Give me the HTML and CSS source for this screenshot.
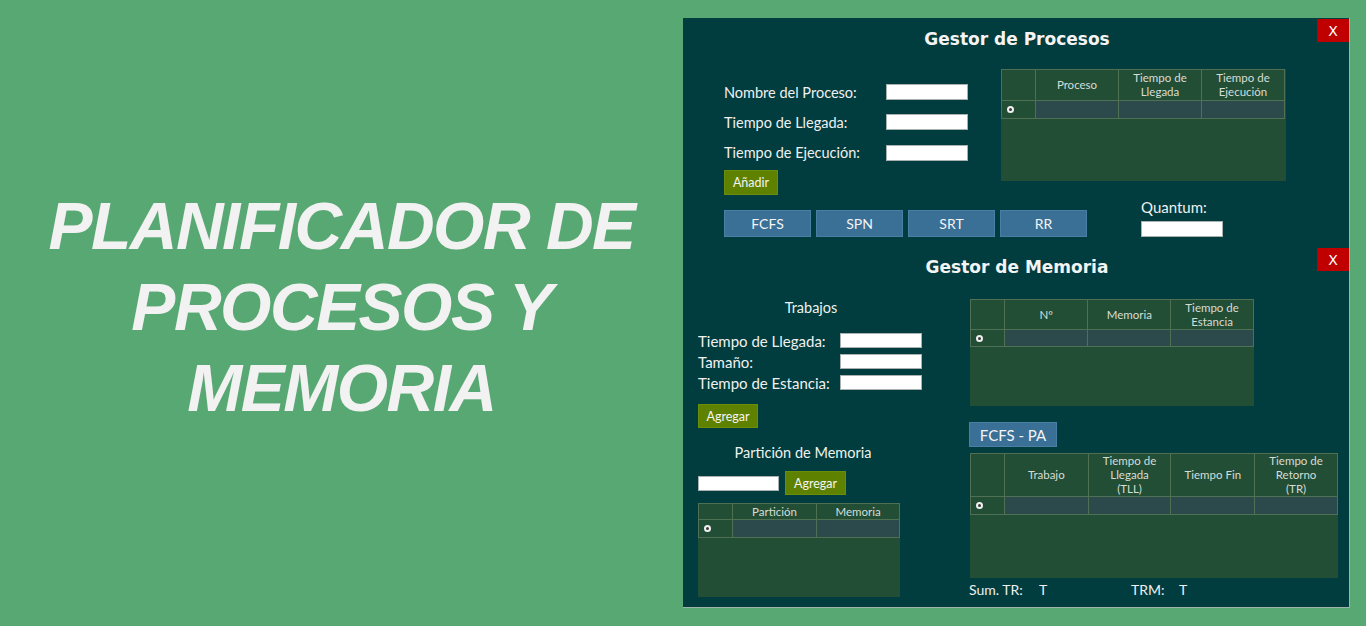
FILE: index.html
```html
<!DOCTYPE html>
<html lang="es">
<head>
<meta charset="utf-8">
<title>Planificador de Procesos y Memoria</title>
<link rel="stylesheet" href="styles.css">
</head>
<body>
<div class="hero">
  <h1 class="hero-title">PLANIFICADOR DE<br>PROCESOS Y<br>MEMORIA</h1>
</div>
<div class="window">
  <section class="proc">
    <header class="win-head">
      <h2 class="win-title">Gestor de Procesos</h2>
      <button class="close">X</button>
    </header>
    <div class="proc-top">
      <div class="proc-form">
        <div class="frow"><label class="flabel">Nombre del Proceso:</label><input class="field" type="text"></div>
        <div class="frow"><label class="flabel">Tiempo de Llegada:</label><input class="field" type="text"></div>
        <div class="frow frow-last"><label class="flabel">Tiempo de Ejecución:</label><input class="field" type="text"></div>
        <button class="btn btn-olive btn-anadir">Añadir</button>
      </div>
      <div class="tbl tbl-proc">
        <table>
          <colgroup><col class="c-rh"><col class="c83"><col class="c83"><col class="c83"></colgroup>
          <tr class="hrow hrow-proc"><th></th><th>Proceso</th><th>Tiempo de<br>Llegada</th><th>Tiempo de<br>Ejecución</th></tr>
          <tr class="drow"><td class="rh"><span class="dot"></span></td><td></td><td></td><td></td></tr>
        </table>
      </div>
    </div>
    <div class="proc-bottom">
      <div class="algos">
        <button class="btn btn-blue btn-algo">FCFS</button>
        <button class="btn btn-blue btn-algo">SPN</button>
        <button class="btn btn-blue btn-algo">SRT</button>
        <button class="btn btn-blue btn-algo">RR</button>
      </div>
      <div class="quantum">
        <div class="qlabel">Quantum:</div>
        <input class="field" type="text">
      </div>
    </div>
  </section>

  <section class="mem">
    <header class="win-head win-head-mem">
      <h2 class="win-title">Gestor de Memoria</h2>
      <button class="close">X</button>
    </header>
    <div class="mem-body">
      <div class="mem-left">
        <div class="sub-title">Trabajos</div>
        <div class="jobs">
          <div class="frow2"><label class="flabel2">Tiempo de Llegada:</label><input class="field field2" type="text"></div>
          <div class="frow2"><label class="flabel2">Tamaño:</label><input class="field field2" type="text"></div>
          <div class="frow2"><label class="flabel2">Tiempo de Estancia:</label><input class="field field2" type="text"></div>
        </div>
        <button class="btn btn-olive btn-agregar">Agregar</button>
        <div class="sub-title sub-title-part">Partición de Memoria</div>
        <div class="prow">
          <input class="field field2 field-part" type="text">
          <button class="btn btn-olive btn-agregar2">Agregar</button>
        </div>
        <div class="tbl tbl-part">
          <table>
            <colgroup><col class="c-rh"><col class="c84"><col class="c83"></colgroup>
            <tr class="hrow hrow-part"><th></th><th>Partición</th><th>Memoria</th></tr>
            <tr class="drow"><td class="rh"><span class="dot"></span></td><td></td><td></td></tr>
          </table>
        </div>
      </div>
      <div class="mem-right">
        <div class="tbl tbl-mem">
          <table>
            <colgroup><col class="c-rh"><col class="c84"><col class="c83"><col class="c83"></colgroup>
            <tr class="hrow hrow-mem"><th></th><th>Nº</th><th>Memoria</th><th>Tiempo de<br>Estancia</th></tr>
            <tr class="drow drow-mem"><td class="rh"><span class="dot"></span></td><td></td><td></td><td></td></tr>
          </table>
        </div>
        <button class="btn btn-blue btn-pa">FCFS - PA</button>
        <div class="tbl tbl-res">
          <table>
            <colgroup><col class="c-rh"><col class="c84"><col class="c83"><col class="c84"><col class="c83"></colgroup>
            <tr class="hrow hrow-res"><th></th><th>Trabajo</th><th>Tiempo de<br>Llegada<br>(TLL)</th><th>Tiempo Fin</th><th>Tiempo de<br>Retorno<br>(TR)</th></tr>
            <tr class="drow"><td class="rh"><span class="dot"></span></td><td></td><td></td><td></td><td></td></tr>
          </table>
        </div>
        <div class="sums">
          <span class="s-lab1">Sum. TR:</span><span class="s-val1">T</span>
          <span class="s-lab2">TRM:</span><span class="s-val2">T</span>
        </div>
      </div>
    </div>
  </section>
</div>
</body>
</html>
```

FILE: styles.css
```css
* { box-sizing: border-box; }

html, body {
  margin: 0;
  padding: 0;
}

body {
  width: 1366px;
  height: 626px;
  overflow: hidden;
  background: #58a873;
  display: flex;
  align-items: flex-start;
  font-family: "Lato", "Liberation Sans", sans-serif;
}

.hero {
  width: 683px;
  height: 626px;
  display: flex;
  align-items: center;
  justify-content: center;
  padding-bottom: 12px;
}

.hero-title {
  margin: 0;
  font-family: "Liberation Sans", Arial, sans-serif;
  font-weight: bold;
  font-style: italic;
  font-size: 66px;
  letter-spacing: -1.5px;
  line-height: 81px;
  color: #f2f2f2;
  text-align: center;
}

.window {
  margin-top: 18px;
  width: 667px;
  height: 590px;
  background: #013d3f;
  border-right: 1px solid #9fb3ad;
  border-bottom: 1px solid #9fb3ad;
  color: #f0f0f0;
}

.win-head {
  position: relative;
  height: 42px;
  display: flex;
  justify-content: center;
  align-items: center;
}

.win-head-mem { height: 40px; }

.win-title {
  margin: 0;
  font-family: "DejaVu Sans", Verdana, sans-serif;
  font-weight: bold;
  font-size: 17px;
  color: #f4f4f4;
  padding-left: 2px;
}

.close {
  position: absolute;
  top: 1px;
  right: 0;
  width: 32px;
  height: 23px;
  border: none;
  background: #c00000;
  color: #ffffff;
  font-family: "DejaVu Sans", Verdana, sans-serif;
  font-size: 14px;
  padding: 0;
}

.proc {
  height: 229px;
}

.proc-top {
  display: flex;
  align-items: flex-start;
  padding-left: 41px;
}

.proc-form {
  width: 277px;
  margin-top: 17px;
  display: flex;
  flex-direction: column;
}

.frow {
  height: 30px;
  display: flex;
  align-items: center;
}

.frow-last { height: 31px; }

.flabel {
  width: 162px;
  font-size: 14.5px;
  color: #f0f0f0;
}

.field {
  width: 82px;
  height: 16px;
  background: #ffffff;
  border: 1px solid #a8b0b0;
  padding: 0;
  margin: 0;
}

.btn {
  border: 1px solid transparent;
  color: #f4f4f4;
  font-family: "Lato", "Liberation Sans", sans-serif;
  padding: 0;
  margin: 0;
}

.btn-olive {
  background: #5f8100;
  border-color: #6a8e0a;
  font-size: 12.5px;
}

.btn-blue {
  background: #3a6f96;
  border-color: #4a7ea4;
  font-size: 14px;
}

.btn-anadir {
  margin-top: 2px;
  width: 54px;
  height: 25px;
}

.tbl {
  background: #234e36;
}

.tbl table {
  border-collapse: collapse;
  table-layout: fixed;
}

.tbl th, .tbl td {
  border: 1px solid #4f7052;
  padding: 0;
}

.tbl th {
  font-weight: normal;
  font-size: 11.5px;
  line-height: 14px;
  color: #d6ddd6;
  text-align: center;
  vertical-align: middle;
}

.c-rh { width: 34px; }
.c83 { width: 83px; }
.c84 { width: 84px; }

.drow td {
  height: 18px;
  background: #2c4a4b;
}

.drow td.rh {
  background: #234e36;
  text-align: left;
  padding-left: 5px;
}

.drow-mem td { height: 17px; }

.dot {
  display: block;
  width: 7px;
  height: 7px;
  border-radius: 50%;
  background: #3a3a3a;
  border: 2px solid #f0f0f0;
}

.tbl-proc {
  margin-top: 9px;
  width: 285px;
  height: 112px;
}

.hrow-proc th { height: 31px; }

.proc-bottom {
  margin-top: 4px;
  padding-left: 41px;
  display: flex;
  align-items: flex-end;
}

.algos {
  display: flex;
  gap: 5px;
}

.btn-algo {
  width: 87px;
  height: 27px;
}

.quantum {
  margin-left: 54px;
  display: flex;
  flex-direction: column;
}

.qlabel {
  height: 16px;
  line-height: 16px;
  font-size: 15px;
  margin-bottom: 6px;
}

.mem {
  height: 360px;
}

.mem-body {
  display: flex;
  align-items: flex-start;
}

.mem-left {
  margin-left: 15px;
  width: 226px;
  display: flex;
  flex-direction: column;
  align-items: flex-start;
}

.sub-title {
  width: 226px;
  margin-top: 13px;
  height: 16px;
  line-height: 16px;
  font-size: 14.5px;
  text-align: center;
  color: #eef2ee;
}

.jobs {
  margin-top: 14px;
}

.frow2 {
  height: 21px;
  display: flex;
  align-items: center;
}

.flabel2 {
  width: 142px;
  font-size: 15px;
  color: #f0f0f0;
}

.field2 { height: 15px; }

.btn-agregar {
  margin-top: 11px;
  width: 60px;
  height: 24px;
}

.sub-title-part {
  width: 210px;
  margin-top: 17px;
}

.prow {
  margin-top: 10px;
  display: flex;
  align-items: center;
  gap: 6px;
}

.field-part { width: 81px; }

.btn-agregar2 {
  width: 61px;
  height: 24px;
}

.tbl-part {
  margin-top: 8px;
  width: 202px;
  height: 94px;
}

.hrow-part th { height: 16px; }

.mem-right {
  margin-left: 46px;
  display: flex;
  flex-direction: column;
  align-items: flex-start;
}

.tbl-mem {
  margin-top: 12px;
  width: 284px;
  height: 107px;
}

.hrow-mem th { height: 30px; }

.btn-pa {
  margin-top: 16px;
  margin-left: -1px;
  width: 88px;
  height: 25px;
  font-size: 15px;
}

.tbl-res {
  margin-top: 6px;
  width: 368px;
  height: 125px;
}

.hrow-res th { height: 43px; }

.sums {
  margin-top: 4px;
  margin-left: -1px;
  height: 16px;
  line-height: 16px;
  font-size: 14px;
  display: flex;
}

.s-lab1 { width: 70px; }
.s-val1 { width: 92px; }
.s-lab2 { width: 48px; }
```
